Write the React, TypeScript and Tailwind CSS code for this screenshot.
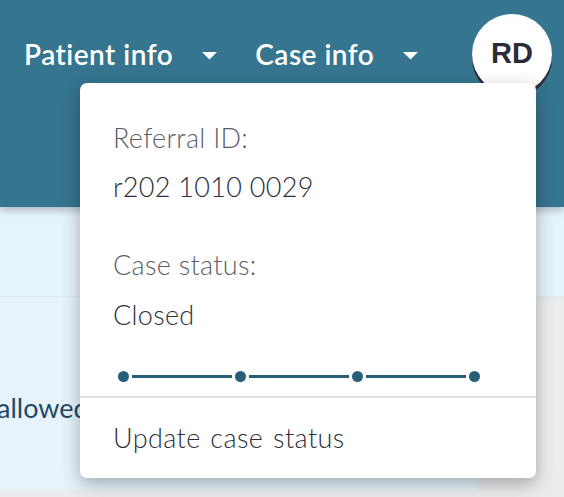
import React from 'react';

const Caret = () => (
  <svg width="15" height="8" viewBox="0 0 15 8" className="ml-[29px] mt-[4px]">
    <path d="M0 0 L15 0 L7.5 7.5 Z" fill="#ffffff" />
  </svg>
);

const StatusTrack = ({ steps }: { steps: number }) => (
  <div className="flex items-center ml-[5px] w-[362px]">
    {Array.from({ length: steps }).map((_, i) => (
      <React.Fragment key={i}>
        <div className="w-[11px] h-[11px] rounded-full bg-[#275f78] shrink-0" />
        {i < steps - 1 && <div className="flex-1 h-[3px] mx-[3px] bg-[#275f78]" />}
      </React.Fragment>
    ))}
  </div>
);

const App = () => {
  return (
    <div
      className="relative w-[564px] h-[497px] overflow-hidden bg-[#ebeced]"
      style={{ fontFamily: 'Lato, "Open Sans", sans-serif' }}
    >
      <header className="relative z-10 h-[207px] bg-[#36758f] shadow-[0_3px_8px_rgba(0,0,0,0.25)]">
        <nav className="flex items-center h-[110px] pl-[24px] pr-[12px] pb-[2px] text-white text-[28px] tracking-[0.5px] font-semibold">
          <span>Patient info</span>
          <Caret />
          <span className="ml-[38px]">Case info</span>
          <Caret />
          <div className="ml-auto w-[80px] h-[80px] rounded-full bg-white flex items-center justify-center shadow-[0_4px_0_#2a2c38] text-[#2a2c38] text-[29px] font-bold tracking-normal"
            style={{ fontFamily: '"Liberation Sans", Arial, sans-serif' }}>
            RD
          </div>
        </nav>
      </header>

      <div className="h-[90px] bg-[#e5f3fa] border-b border-[#dde7ec]" />

      <div className="flex">
        <div className="w-[480px] h-[193px] bg-[#e6f3fb] pt-[91px] -ml-[3px]">
          <span className="text-[27px] text-[#1f4a66]">allowed</span>
        </div>
      </div>

      <div className="absolute z-20 left-[80px] top-[83px] w-[456px] h-[395px] bg-white rounded-[7px] shadow-[0_6px_18px_rgba(0,0,0,0.3)] flex flex-col">
        <div className="pl-[33px] pt-[38px] text-[27px] font-light tracking-[0.3px]">
          <p className="text-[#5b5e68] leading-[34px]">Referral ID:</p>
          <p className="text-[#2c2f3b] leading-[34px] mt-[15px]">r202 1010 0029</p>
          <p className="text-[#5b5e68] leading-[34px] mt-[44px]">Case status:</p>
          <p className="text-[#2c2f3b] leading-[34px] mt-[16px]">Closed</p>
          <div className="mt-[39px]">
            <StatusTrack steps={4} />
          </div>
        </div>
        <div className="mt-[14px] h-[2px] bg-[#e1e1e1]" />
        <div className="pl-[33px] pt-[23px] text-[27px] font-light tracking-[0.4px] [word-spacing:2px] text-[#2c2f3b] leading-[34px]">
          Update case status
        </div>
      </div>
    </div>
  );
};

export default App;
